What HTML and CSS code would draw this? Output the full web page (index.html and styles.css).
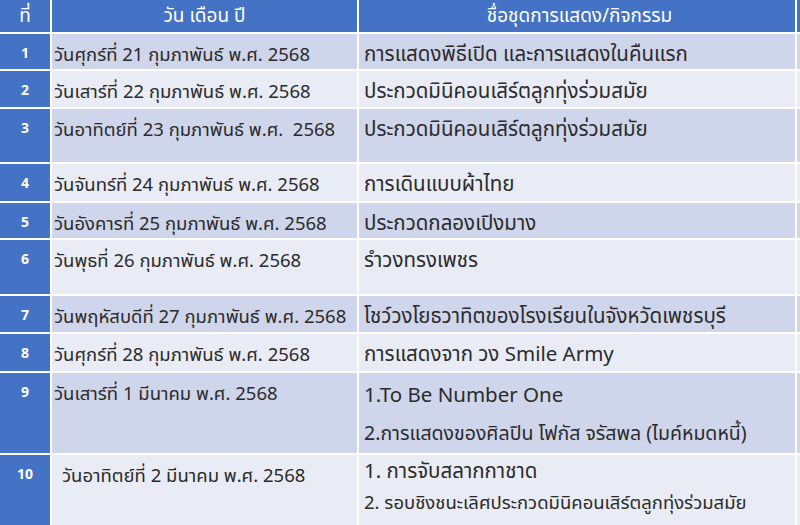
FILE: index.html
```html
<!DOCTYPE html>
<html lang="th">
<head>
<meta charset="utf-8">
<link rel="stylesheet" href="styles.css">
</head>
<body>
<table class="sched">
  <colgroup><col class="c-no"><col class="c-date"><col class="c-act"></colgroup>
  <thead>
    <tr class="rh"><th>ที่</th><th>วัน เดือน ปี</th><th class="act">ชื่อชุดการแสดง/กิจกรรม</th></tr>
  </thead>
  <tbody>
    <tr class="r1"><td class="no">1</td><td class="date">วันศุกร์ที่ 21 กุมภาพันธ์ พ.ศ. 2568</td><td class="act">การแสดงพิธีเปิด และการแสดงในคืนแรก</td></tr>
    <tr class="r2"><td class="no">2</td><td class="date">วันเสาร์ที่ 22 กุมภาพันธ์ พ.ศ. 2568</td><td class="act">ประกวดมินิคอนเสิร์ตลูกทุ่งร่วมสมัย</td></tr>
    <tr class="r3"><td class="no">3</td><td class="date">วันอาทิตย์ที่ 23 กุมภาพันธ์ พ.ศ.&nbsp; 2568</td><td class="act">ประกวดมินิคอนเสิร์ตลูกทุ่งร่วมสมัย</td></tr>
    <tr class="r4"><td class="no">4</td><td class="date">วันจันทร์ที่ 24 กุมภาพันธ์ พ.ศ. 2568</td><td class="act">การเดินแบบผ้าไทย</td></tr>
    <tr class="r5"><td class="no">5</td><td class="date">วันอังคารที่ 25 กุมภาพันธ์ พ.ศ. 2568</td><td class="act">ประกวดกลองเปิงมาง</td></tr>
    <tr class="r6"><td class="no">6</td><td class="date">วันพุธที่ 26 กุมภาพันธ์ พ.ศ. 2568</td><td class="act">รำวงทรงเพชร</td></tr>
    <tr class="r7"><td class="no">7</td><td class="date">วันพฤหัสบดีที่ 27 กุมภาพันธ์ พ.ศ. 2568</td><td class="act">โชว์วงโยธวาทิตของโรงเรียนในจังหวัดเพชรบุรี</td></tr>
    <tr class="r8"><td class="no">8</td><td class="date">วันศุกร์ที่ 28 กุมภาพันธ์ พ.ศ. 2568</td><td class="act">การแสดงจาก วง Smile Army</td></tr>
    <tr class="r9"><td class="no">9</td><td class="date">วันเสาร์ที่ 1 มีนาคม พ.ศ. 2568</td><td class="act"><div class="ln">1.To Be Number One</div><div class="ln l2">2.การแสดงของศิลปิน โฟกัส จรัสพล (ไมค์หมดหนี้)</div></td></tr>
    <tr class="r10"><td class="no">10</td><td class="date ind">วันอาทิตย์ที่ 2 มีนาคม พ.ศ. 2568</td><td class="act"><div class="ln sm">1. การจับสลากกาชาด</div><div class="ln xs">2. รอบชิงชนะเลิศประกวดมินิคอนเสิร์ตลูกทุ่งร่วมสมัย</div></td></tr>
  </tbody>
</table>
</body>
</html>
```
FILE: styles.css
```css
html, body {
  margin: 0;
  padding: 0;
  background: #ffffff;
}
body {
  width: 800px;
  height: 525px;
  overflow: hidden;
  font-family: "Noto Sans Thai", "Noto Sans", "DejaVu Sans", sans-serif;
}
.sched {
  width: 800px;
  border-collapse: separate;
  border-spacing: 0;
  table-layout: fixed;
}
.c-no { width: 52px; }
.c-date { width: 307px; }
.c-act { width: auto; }
.sched th, .sched td {
  box-sizing: border-box;
  border-right: 2px solid #ffffff;
  border-bottom: 2px solid #ffffff;
  padding: 0;
  vertical-align: top;
  color: #2b2b2b;
  font-weight: normal;
  text-align: left;
  background: var(--bg);
}
.sched th.act, .sched td.act {
  border-right: 0;
  box-shadow: inset -3px 0 0 var(--bg), inset -5px 0 0 #ffffff;
}
.sched th {
  color: #ffffff;
  text-align: center;
  height: 33px;
  font-size: 19px;
  line-height: 30px;
  padding-top: 2px;
}
.rh { --bg: #4472c4; }
.sched th.act { text-align: center; }
.sched td.date {
  font-size: 18.5px;
  line-height: 26px;
  padding: 8px 0 0 2px;
}
.sched td.act {
  font-size: 20.5px;
  line-height: 28px;
  padding: 7px 0 0 5px;
}
.sched td.no {
  background: #4472c4;
  color: #ffffff;
  text-align: center;
  font-weight: bold;
  font-size: 14px;
  line-height: 20px;
  padding-top: 10px;
}
.sched td.ind { padding-left: 10px; }
.r1, .r3, .r5, .r7, .r9 { --bg: #cfd5ea; }
.r2, .r4, .r6, .r8, .r10 { --bg: #e9ebf5; }
.r1 td { height: 36px; }
.r2 td { height: 38px; }
.r3 td { height: 55px; }
.r4 td { height: 39px; }
.r5 td { height: 37px; }
.r6 td { height: 56px; }
.r7 td { height: 38px; }
.r8 td { height: 39px; }
.r9 td { height: 75px; }
.r10 td { height: 79px; }
.ln { line-height: 38px; }
.r9 .ln:first-child { margin-top: -3px; }
.ln.l2 { font-size: 19.5px; }
.ln.sm { line-height: 33px; margin-top: -7px; }
.ln.xs { line-height: 31px; font-size: 18.5px; }
```
